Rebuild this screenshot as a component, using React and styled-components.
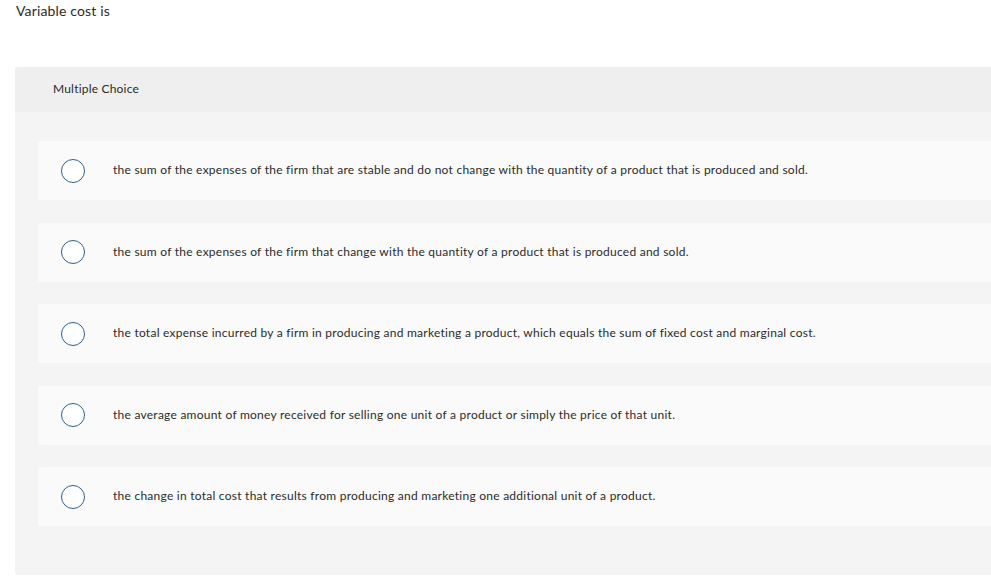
import React from 'react';
import styled, { createGlobalStyle } from 'styled-components';

const GlobalStyle = createGlobalStyle`
    html, body {
        margin: 0;
        padding: 0;
        background: #ffffff;
        overflow: hidden;
    }
    body {
        font-family: Lato, "Open Sans", Arial, sans-serif;
        font-variant-ligatures: none;
        color: #2b2b2b;
    }
`;

const Page = styled.div`
    width: 991px;
    height: 577px;
`;

const Prompt = styled.div`
    height: 67px;
    padding: 3px 0 0 16px;
    box-sizing: border-box;
    font-size: 14px;
    line-height: 16px;
    letter-spacing: 0.15px;
`;

const Panel = styled.section`
    margin: 0 -12px 0 15px;
    height: 508px;
    background: #f4f4f4;
    border-radius: 3px;
`;

const PanelHeader = styled.div`
    height: 45px;
    box-sizing: border-box;
    display: flex;
    align-items: center;
    padding: 0 0 2px 38px;
    background: #efefef;
    font-size: 12px;
    letter-spacing: 0.2px;
    border-radius: 3px 3px 0 0;
`;

const OptionList = styled.div`
    display: flex;
    flex-direction: column;
    gap: 22.5px;
    padding: 29px 0 0 23px;
`;

const Option = styled.label`
    height: 59px;
    display: flex;
    align-items: center;
    padding-left: 23px;
    background: #fafafa;
    border-radius: 3px;
    cursor: pointer;
`;

const Radio = styled.span`
    flex: none;
    width: 22px;
    height: 22px;
    border: 1.5px solid #2e5f8e;
    border-radius: 50%;
    background: #ffffff;
`;

const OptionText = styled.span`
    margin-left: 28px;
    padding-bottom: 2px;
    font-size: 12px;
    letter-spacing: 0.25px;
`;

const options = [
    'the sum of the expenses of the firm that are stable and do not change with the quantity of a product that is produced and sold.',
    'the sum of the expenses of the firm that change with the quantity of a product that is produced and sold.',
    'the total expense incurred by a firm in producing and marketing a product, which equals the sum of fixed cost and marginal cost.',
    'the average amount of money received for selling one unit of a product or simply the price of that unit.',
    'the change in total cost that results from producing and marketing one additional unit of a product.',
];

export default function App() {
    return (
        <React.Fragment>
            <GlobalStyle />
            <Page>
                <Prompt>Variable cost is</Prompt>
                <Panel>
                    <PanelHeader>Multiple Choice</PanelHeader>
                    <OptionList>
                        {options.map((text) => (
                            <Option key={text}>
                                <Radio />
                                <OptionText>{text}</OptionText>
                            </Option>
                        ))}
                    </OptionList>
                </Panel>
            </Page>
        </React.Fragment>
    );
}
